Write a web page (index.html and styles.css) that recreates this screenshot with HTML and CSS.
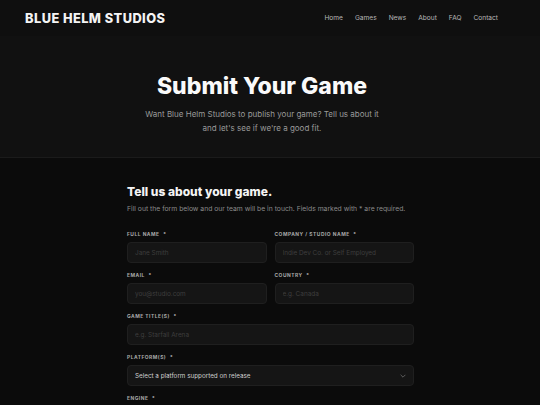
FILE: index.html
```html
<!DOCTYPE html>
<html lang="en">
<head>
<meta charset="utf-8">
<title>Submit Your Game - Blue Helm Studios</title>
<link rel="stylesheet" href="styles.css">
</head>
<body>
<header class="site-header">
  <div class="logo">BLUE HELM STUDIOS</div>
  <nav class="nav">
    <a href="#">Home</a>
    <a href="#">Games</a>
    <a href="#">News</a>
    <a href="#">About</a>
    <a href="#">FAQ</a>
    <a href="#">Contact</a>
  </nav>
</header>
<section class="hero">
  <h1>Submit Your Game</h1>
  <p>Want Blue Helm Studios to publish your game? Tell us about it and let's see if we're a good fit.</p>
</section>
<main class="form-section">
  <div class="form-wrap">
    <h2>Tell us about your game.</h2>
    <p class="intro">Fill out the form below and our team will be in touch. Fields marked with * are required.</p>
    <form class="form">
      <div class="row two">
        <label class="field"><span class="label">Full Name <i>*</i></span><input placeholder="Jane Smith"></label>
        <label class="field"><span class="label">Company / Studio Name <i>*</i></span><input placeholder="Indie Dev Co. or Self Employed"></label>
      </div>
      <div class="row two">
        <label class="field"><span class="label">Email <i>*</i></span><input placeholder="you@studio.com"></label>
        <label class="field"><span class="label">Country <i>*</i></span><input placeholder="e.g. Canada"></label>
      </div>
      <div class="row">
        <label class="field"><span class="label">Game Title(s) <i>*</i></span><input placeholder="e.g. Starfall Arena"></label>
      </div>
      <div class="row">
        <label class="field"><span class="label">Platform(s) <i>*</i></span>
          <span class="select">Select a platform supported on release
            <svg viewBox="0 0 10 6" width="6" height="4"><path d="M1 1l4 4 4-4" fill="none" stroke="#6a6a6a" stroke-width="1.4"/></svg>
          </span>
        </label>
      </div>
      <div class="row">
        <label class="field"><span class="label">Engine <i>*</i></span><input placeholder=""></label>
      </div>
    </form>
  </div>
</main>
</body>
</html>
```
FILE: styles.css
```css
* { box-sizing: border-box; }
html, body { margin: 0; padding: 0; }
body {
  background: #0b0b0b;
  font-family: Inter, "Noto Sans", sans-serif;
  color: #e8e8e8;
  width: 540px;
  overflow: hidden;
}
.site-header {
  height: 36px;
  background: #0f0f0f;
  display: flex;
  align-items: center;
  justify-content: space-between;
  padding: 0 42px 0 25px;
}
.logo {
  font-weight: 800;
  font-size: 12.8px;
  color: #f4f4f4;
  letter-spacing: 0.45px;
}
.nav { display: flex; gap: 12px; }
.nav a {
  color: #b8b8b8;
  text-decoration: none;
  font-size: 6.6px;
}
.hero {
  background: #111111;
  border-bottom: 1px solid #1b1b1b;
  height: 122px;
  display: flex;
  flex-direction: column;
  align-items: center;
  padding: 38px 16px 0 0;
  text-align: center;
}
.hero h1 {
  margin: 0;
  font-size: 23px;
  font-weight: 800;
  color: #fafafa;
  line-height: 24px;
}
.hero p {
  margin: 9px 0 0;
  width: 245px;
  font-size: 8px;
  line-height: 14px;
  color: #9a9a9a;
}
.form-section { padding-top: 27px; }
.form-wrap { width: 287px; margin-left: 127px; }
.form-wrap h2 {
  margin: 0;
  font-size: 12px;
  font-weight: 800;
  color: #f4f4f4;
  line-height: 14px;
}
.intro {
  margin: 5px 0 0;
  font-size: 6.8px;
  color: #8a8a8a;
  line-height: 9px;
}
.form { margin-top: 18px; display: flex; flex-direction: column; gap: 9px; }
.row { display: grid; grid-template-columns: 1fr; gap: 8px; }
.row.two { grid-template-columns: 1fr 1fr; }
.field { display: flex; flex-direction: column; gap: 4px; }
.label {
  font-size: 4.9px;
  font-weight: 700;
  text-transform: uppercase;
  letter-spacing: 0.5px;
  color: #a8a8a8;
  line-height: 7px;
}
.label i { font-style: normal; margin-left: 2px; color: #c0c0c0; }
.field input, .select {
  height: 21px;
  background: #151515;
  border: 1px solid #1f1f1f;
  border-radius: 4px;
  padding: 0 7px;
  font-family: inherit;
  font-size: 6.4px;
  color: #ccc;
  outline: none;
}
.field input::placeholder { color: #3e3e3e; }
.select {
  display: flex;
  align-items: center;
  justify-content: space-between;
  color: #cfcfcf;
  font-size: 6.3px;
}
```
